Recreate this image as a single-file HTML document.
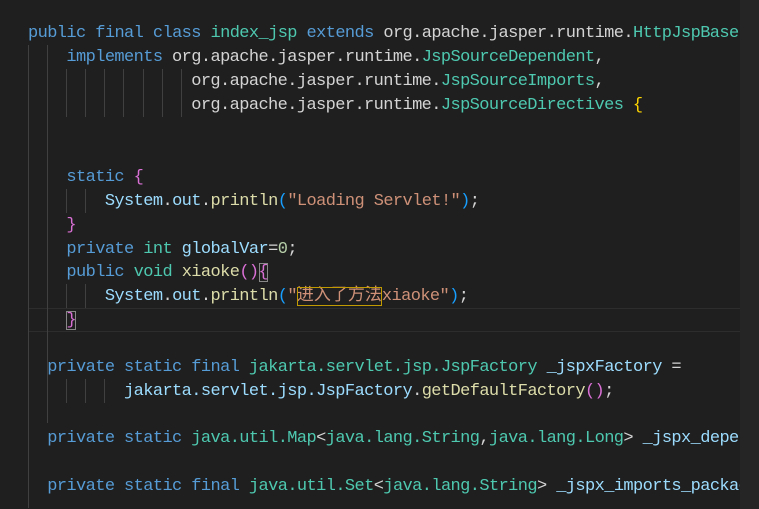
<!DOCTYPE html>
<html><head><meta charset="utf-8"><style>
body{margin:0;width:759px;height:509px;background:#1f1f1f;overflow:hidden;position:relative;font-family:"Liberation Mono","Noto Sans CJK SC",monospace;font-size:17px;letter-spacing:-0.6px;}
.l{position:absolute;left:28px;height:23.9px;line-height:23.9px;white-space:pre;color:#d4d4d4;}
.k{color:#569cd6}.t{color:#4ec9b0}.v{color:#9cdcfe}.f{color:#dcdcaa}.s{color:#ce9178}.n{color:#b5cea8}
.y{color:#ffd700}.m{color:#da70d6}.b{color:#179fff}
.g{position:absolute;width:1px;background:#404040}
.side{position:absolute;left:740px;top:0;width:19px;height:509px;background:#252526}
.cur{position:absolute;left:28px;width:712px;top:308px;height:22px;border-top:1px solid #2d2d2d;border-bottom:1px solid #2d2d2d}
.box{outline:1px solid #888;outline-offset:-1px}
.sel{outline:1px solid #c09a00;outline-offset:-1px;letter-spacing:0}
</style></head><body>
<div class="cur"></div>
<!-- indent guides -->
<div class="g" style="left:28px;top:45px;height:463px"></div>
<div class="g" style="left:47px;top:45px;height:24px"></div>
<div class="g" style="left:47px;top:69px;height:354px"></div>
<div class="g" style="left:66px;top:69px;height:48px"></div>
<div class="g" style="left:85px;top:69px;height:48px"></div>
<div class="g" style="left:104px;top:69px;height:48px"></div>
<div class="g" style="left:123px;top:69px;height:48px"></div>
<div class="g" style="left:143px;top:69px;height:48px"></div>
<div class="g" style="left:162px;top:69px;height:48px"></div>
<div class="g" style="left:181px;top:69px;height:48px"></div>
<div class="g" style="left:66px;top:189px;height:24px"></div>
<div class="g" style="left:85px;top:189px;height:24px"></div>
<div class="g" style="left:66px;top:284px;height:24px"></div>
<div class="g" style="left:85px;top:284px;height:24px"></div>
<div class="g" style="left:66px;top:379px;height:24px"></div>
<div class="g" style="left:85px;top:379px;height:24px"></div>
<div class="g" style="left:104px;top:379px;height:24px"></div>

<div class="l" style="top:22px"><span class="k">public</span> <span class="k">final</span> <span class="k">class</span> <span class="t">index_jsp</span> <span class="k">extends</span> org.apache.jasper.runtime.<span class="t">HttpJspBase</span></div>
<div class="l" style="top:46px">    <span class="k">implements</span> org.apache.jasper.runtime.<span class="t">JspSourceDependent</span>,</div>
<div class="l" style="top:70px">                 org.apache.jasper.runtime.<span class="t">JspSourceImports</span>,</div>
<div class="l" style="top:94px">                 org.apache.jasper.runtime.<span class="t">JspSourceDirectives</span> <span class="y">{</span></div>
<div class="l" style="top:166px">    <span class="k">static</span> <span class="m">{</span></div>
<div class="l" style="top:190px">        <span class="v">System</span>.<span class="v">out</span>.<span class="f">println</span><span class="b">(</span><span class="s">"Loading Servlet!"</span><span class="b">)</span>;</div>
<div class="l" style="top:214px">    <span class="m">}</span></div>
<div class="l" style="top:238px">    <span class="k">private</span> <span class="t">int</span> <span class="v">globalVar</span>=<span class="n">0</span>;</div>
<div class="l" style="top:261px">    <span class="k">public</span> <span class="t">void</span> <span class="f">xiaoke</span><span class="m">()</span><span class="m box">{</span></div>
<div class="l" style="top:285px">        <span class="v">System</span>.<span class="v">out</span>.<span class="f">println</span><span class="b">(</span><span class="s">"<span class="sel">进入了方法</span>xiaoke"</span><span class="b">)</span>;</div>
<div class="l" style="top:309px">    <span class="m box">}</span></div>
<div class="l" style="top:356px">  <span class="k">private</span> <span class="k">static</span> <span class="k">final</span> <span class="t">jakarta.servlet.jsp.JspFactory</span> <span class="v">_jspxFactory</span> =</div>
<div class="l" style="top:380px">          <span class="v">jakarta.servlet.jsp.JspFactory</span>.<span class="f">getDefaultFactory</span><span class="m">()</span>;</div>
<div class="l" style="top:427px">  <span class="k">private</span> <span class="k">static</span> <span class="t">java.util.Map</span>&lt;<span class="t">java.lang.String</span>,<span class="t">java.lang.Long</span>&gt; <span class="v">_jspx_depe</span></div>
<div class="l" style="top:475px">  <span class="k">private</span> <span class="k">static</span> <span class="k">final</span> <span class="t">java.util.Set</span>&lt;<span class="t">java.lang.String</span>&gt; <span class="v">_jspx_imports_packag</span></div>
<div class="side" style="z-index:2"></div>
</body></html>
